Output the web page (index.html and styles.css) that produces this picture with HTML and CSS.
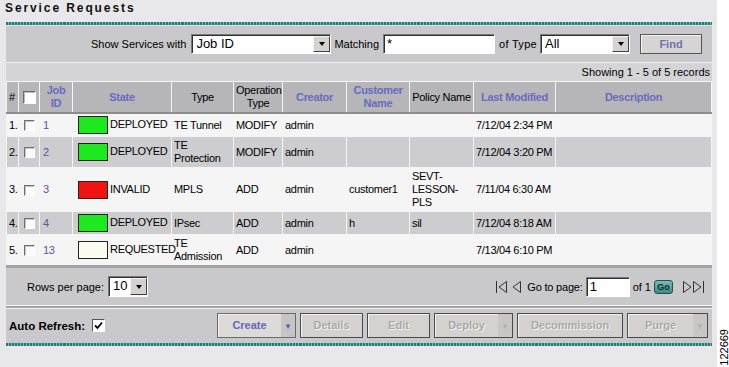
FILE: index.html
```html
<!DOCTYPE html>
<html lang="en">
<head>
  <meta charset="UTF-8">
  <title>Service Requests</title>
  <link rel="stylesheet" href="styles.css">
</head>
<body>
  <div class="page">
    <div class="main">
      <h1 class="title">Service Requests</h1>
      <div class="panel">
        <div class="search">
          <span>Show Services with</span>
          <span class="select sel-job"><span class="val">Job ID</span><span class="drop"><i></i></span></span>
          <span class="lbl">Matching</span>
          <span class="input inp-match">*</span>
          <span class="lbl lbl-type">of Type</span>
          <span class="select sel-type"><span class="val">All</span><span class="drop"><i></i></span></span>
          <span class="btn-find">Find</span>
        </div>
        <div class="showing">Showing 1 - 5 of 5 records</div>

        <table class="grid">
          <colgroup>
            <col style="width:12px"><col style="width:21px"><col style="width:33px"><col style="width:99px">
            <col style="width:62px"><col style="width:49px"><col style="width:64px"><col style="width:63px">
            <col style="width:64px"><col style="width:82px"><col style="width:156px">
          </colgroup>
          <thead>
            <tr>
              <th class="left">#</th>
              <th><span class="cb cb-white"></span></th>
              <th class="sort">Job<br>ID</th>
              <th class="sort">State</th>
              <th>Type</th>
              <th>Operation<br>Type</th>
              <th class="sort">Creator</th>
              <th class="sort">Customer<br>Name</th>
              <th>Policy Name</th>
              <th class="sort">Last Modified</th>
              <th class="sort">Description</th>
            </tr>
          </thead>
          <tbody>
            <tr class="light">
              <td>1.</td><td class="c"><span class="cb"></span></td><td class="id">1</td>
              <td><span class="swatch green"></span>DEPLOYED</td>
              <td>TE Tunnel</td><td>MODIFY</td><td>admin</td><td></td><td></td>
              <td>7/12/04 2:34 PM</td><td></td>
            </tr>
            <tr class="dark">
              <td>2.</td><td class="c"><span class="cb"></span></td><td class="id">2</td>
              <td><span class="swatch green"></span>DEPLOYED</td>
              <td>TE<br>Protection</td><td>MODIFY</td><td>admin</td><td></td><td></td>
              <td>7/12/04 3:20 PM</td><td></td>
            </tr>
            <tr class="light">
              <td>3.</td><td class="c"><span class="cb"></span></td><td class="id">3</td>
              <td><span class="swatch red"></span>INVALID</td>
              <td>MPLS</td><td>ADD</td><td>admin</td><td>customer1</td><td>SEVT-<br>LESSON-<br>PLS</td>
              <td>7/11/04 6:30 AM</td><td></td>
            </tr>
            <tr class="dark">
              <td>4.</td><td class="c"><span class="cb"></span></td><td class="id">4</td>
              <td><span class="swatch green"></span>DEPLOYED</td>
              <td>IPsec</td><td>ADD</td><td>admin</td><td>h</td><td>sil</td>
              <td>7/12/04 8:18 AM</td><td></td>
            </tr>
            <tr class="light">
              <td>5.</td><td class="c"><span class="cb"></span></td><td class="id">13</td>
              <td><span class="swatch cream"></span>REQUESTED</td>
              <td>TE<br>Admission</td><td>ADD</td><td>admin</td><td></td><td></td>
              <td>7/13/04 6:10 PM</td><td></td>
            </tr>
          </tbody>
        </table>

        <div class="pager">
          <span>Rows per page:</span>
          <span class="select sel-rows"><span class="val">10</span><span class="drop"><i></i></span></span>
          <div class="nav">
            <svg width="13" height="14" viewBox="0 0 13 14"><path d="M1.5 1v12" stroke="#333" fill="none"/><path d="M11.5 1.5L4 7l7.5 5.5z" stroke="#333" fill="none"/></svg>
            <svg class="ml" width="10" height="14" viewBox="0 0 10 14"><path d="M8.5 1.5L1 7l7.5 5.5z" stroke="#333" fill="none"/></svg>
            <span class="goto">Go to page:</span>
            <span class="input inp-page">1</span>
            <span class="of">of 1</span>
            <span class="go">Go</span>
            <svg class="ml" width="10" height="14" viewBox="0 0 10 14"><path d="M1.5 1.5L9 7l-7.5 5.5z" stroke="#333" fill="none"/></svg>
            <svg width="14" height="14" viewBox="0 0 14 14"><path d="M1.5 1.5L9 7l-7.5 5.5z" stroke="#333" fill="none"/><path d="M11.5 1v12" stroke="#333" fill="none"/></svg>
          </div>
        </div>

        <div class="actions">
          <span class="auto">Auto Refresh:</span>
          <span class="cb cb-check"><svg width="9" height="9" viewBox="0 0 9 9"><path d="M1 4.5l2.5 2.5L8 1.5" stroke="#000" stroke-width="1.8" fill="none"/></svg></span>
          <div class="buttons">
            <span class="btn active w-create"><span class="txt">Create</span><span class="arr">&#9660;</span></span>
            <span class="btn w-details"><span class="txt">Details</span></span>
            <span class="btn w-edit"><span class="txt">Edit</span></span>
            <span class="btn w-deploy"><span class="txt">Deploy</span><span class="arr">&#9660;</span></span>
            <span class="btn w-decom"><span class="txt">Decommission</span></span>
            <span class="btn w-purge"><span class="txt">Purge</span><span class="arr">&#9660;</span></span>
          </div>
        </div>
      </div>
    </div>
    <div class="side"><span class="figno">122669</span></div>
  </div>
</body>
</html>
```

FILE: styles.css
```css
body {
  margin: 0;
  font-family: 'Liberation Sans', Arial, sans-serif;
  font-size: 11px;
  color: #000;
  background: #fff;
}

.page {
  display: flex;
  width: 729px;
  height: 367px;
}

.main {
  width: 717px;
  background: #e8e7ea;
}

.side {
  width: 12px;
  background: #fff;
  display: flex;
  align-items: flex-end;
  justify-content: center;
}

.figno {
  writing-mode: vertical-rl;
  transform: rotate(180deg);
  font-size: 11px;
  padding-top: 1px;
  margin-left: 2px;
}

.title {
  margin: 0;
  height: 22px;
  padding-left: 5px;
  font-size: 12px;
  line-height: 16px;
  font-weight: bold;
  letter-spacing: 1.9px;
  color: #111;
}

.panel {
  margin-left: 6px;
  width: 706px;
  background: #c9c8cb;
  border-top: 3px solid #2a8580;
  border-image: repeating-linear-gradient(90deg, #1f7c77 0 2px, #7fb8b4 2px 3px) 3;
  border-bottom: 3px solid #2a8580;
  border-left: 0;
  border-right: 0;
}

/* search bar */
.search {
  display: flex;
  align-items: center;
  justify-content: flex-end;
  height: 36px;
  padding-right: 10px;
  border-top: 1px solid #e2e2e2;
  border-bottom: 1px solid #f2f2f2;
}

.search .lbl {
  margin-left: 3px;
}

.search .lbl-type {
  margin-left: 4px;
  letter-spacing: 0.3px;
}

.select {
  display: inline-flex;
  align-items: stretch;
  height: 20px;
  box-sizing: border-box;
  background: #fff;
  border: 1px solid;
  border-color: #7a7a7a #fff #fff #7a7a7a;
  box-shadow: inset 1px 1px 0 #303030;
  font-size: 13px;
  letter-spacing: 0;
}

.select .val {
  flex: 1;
  padding: 1px 0 0 4px;
  line-height: 16px;
}

.select .drop {
  width: 15px;
  margin: 1px 0 1px 0;
  background: #d4d3d0;
  border: 1px solid;
  border-color: #f4f4f4 #404040 #404040 #f4f4f4;
  display: flex;
  align-items: center;
  justify-content: center;
}

.select .drop i {
  width: 0;
  height: 0;
  border-left: 3.5px solid transparent;
  border-right: 3.5px solid transparent;
  border-top: 4px solid #000;
}

.sel-job { width: 140px; margin-left: 5px; }
.sel-type { width: 90px; margin-left: 3px; }
.sel-rows { width: 40px; height: 21px; margin-left: 4px; }

.input {
  display: inline-block;
  height: 20px;
  box-sizing: border-box;
  background: #fff;
  border: 1px solid;
  border-color: #7a7a7a #fff #fff #7a7a7a;
  box-shadow: inset 1px 1px 0 #303030;
  font-size: 13px;
  line-height: 17px;
  padding-left: 3px;
  letter-spacing: 0;
}

.inp-match { width: 112px; margin-left: 4px; }
.inp-page { width: 44px; margin-left: 3px; }

.btn-find {
  width: 62px;
  height: 20px;
  box-sizing: border-box;
  margin-left: 10px;
  background: #d6d5d3;
  border: 1px solid #555;
  box-shadow: inset 1px 1px 0 #f6f6f6;
  color: #7272b0;
  font-weight: bold;
  text-align: center;
  line-height: 18px;
  letter-spacing: 0;
}

.showing {
  height: 18px;
  line-height: 18px;
  text-align: right;
  padding-right: 2px;
  background: #d4d3d6;
}

/* table */
.grid {
  width: 705px;
  table-layout: fixed;
  border-collapse: collapse;
}

.grid th, .grid td {
  border: 1px solid #f4f4f4;
  padding: 2px 2px;
  line-height: 13px;
  vertical-align: middle;
  text-align: left;
  white-space: nowrap;
  letter-spacing: -0.3px;
}

.grid th {
  background: #b6b5b8;
  font-weight: normal;
  text-align: center;
  border-bottom: 2px solid #8c8c8c;
}

.grid th.left {
  text-align: left;
}

.grid th.sort {
  color: #6a6ac4;
  font-weight: bold;
}

.grid tr.light td { background: #f5f5f5; }
.grid tr.dark td { background: #cdcccf; }

.grid tbody tr:last-child td {
  border-bottom: 3px solid #a3a3a3;
}

.grid td.c { text-align: center; }
.grid td.id { color: #5656a3; padding-left: 3px; }

.cb {
  display: inline-block;
  width: 11px;
  height: 11px;
  box-sizing: border-box;
  vertical-align: middle;
  background: #fafafa;
  border: 1px solid;
  border-color: #6e6e6e #fff #fff #6e6e6e;
  box-shadow: inset 1px 1px 0 #c8c8c8;
}

.cb-white {
  width: 13px;
  height: 13px;
  background: #fff;
  border-color: #6a6a6a #fff #fff #6a6a6a;
  box-shadow: inset 1px 1px 0 #bbb;
}

.cb-check {
  width: 13px;
  height: 13px;
  background: #fff;
  border-color: #555 #fff #fff #555;
  box-shadow: none;
  margin-left: 7px;
  display: inline-flex;
  align-items: center;
  justify-content: center;
}

.swatch {
  display: inline-block;
  width: 30px;
  height: 18px;
  box-sizing: border-box;
  border: 1px solid #222;
  vertical-align: middle;
  margin: 0 2px 0 3px;
}

.green { background: #1ee81e; }
.red { background: #ee1414; }
.cream { background: #fcfcf0; }

/* pager */
.pager {
  display: flex;
  align-items: center;
  height: 37px;
  padding: 0 6px 0 21px;
  border-bottom: 1px solid #f4f4f4;
}

.nav {
  margin-left: auto;
  display: flex;
  align-items: center;
}

.nav .ml { margin-left: 4px; }
.goto { margin-left: 5px; letter-spacing: -0.2px; }
.of { margin-left: 3px; }

.go {
  width: 19px;
  height: 14px;
  box-sizing: border-box;
  margin: 0 5px 0 3px;
  border: 1px solid #2d4e4c;
  border-radius: 3px;
  background: linear-gradient(#7fbab5, #3e8a84);
  color: #0d2a28;
  font-size: 9px;
  font-weight: bold;
  text-align: center;
  line-height: 12px;
}

/* bottom actions */
.actions {
  display: flex;
  align-items: center;
  height: 35px;
  padding: 0 4px 0 3px;
  border-top: 2px solid #a3a3a3;
  box-shadow: inset 0 1px 0 #f4f4f4;
}

.auto {
  font-weight: bold;
  font-size: 11.5px;
}

.buttons {
  margin-left: auto;
  display: flex;
  gap: 4px;
}

.btn {
  display: flex;
  height: 25px;
  box-sizing: border-box;
  background: #d3d2d0;
  border: 1px solid #4a4a4a;
  box-shadow: inset 1px 1px 0 #f2f2f2;
  font-weight: bold;
  color: #a9a9a9;
  text-shadow: 1px 1px 0 #f2f2f2;
}

.btn .txt {
  flex: 1;
  text-align: center;
  line-height: 23px;
}

.btn .arr {
  width: 14px;
  background: #c8c7c5;
  font-size: 8px;
  line-height: 26px;
  text-align: center;
  color: #b0b0b0;
  text-shadow: none;
}

.btn.active {
  background: #dcdbda;
  border-color: #6a6a6a;
  color: #6767b4;
  text-shadow: none;
}

.btn.active .arr {
  color: #5555cc;
  background: #c6c5c4;
}

.w-create { width: 79px; }
.w-details { width: 63px; }
.w-edit { width: 63px; }
.w-deploy { width: 79px; }
.w-decom { width: 106px; }
.w-purge { width: 81px; }
```
